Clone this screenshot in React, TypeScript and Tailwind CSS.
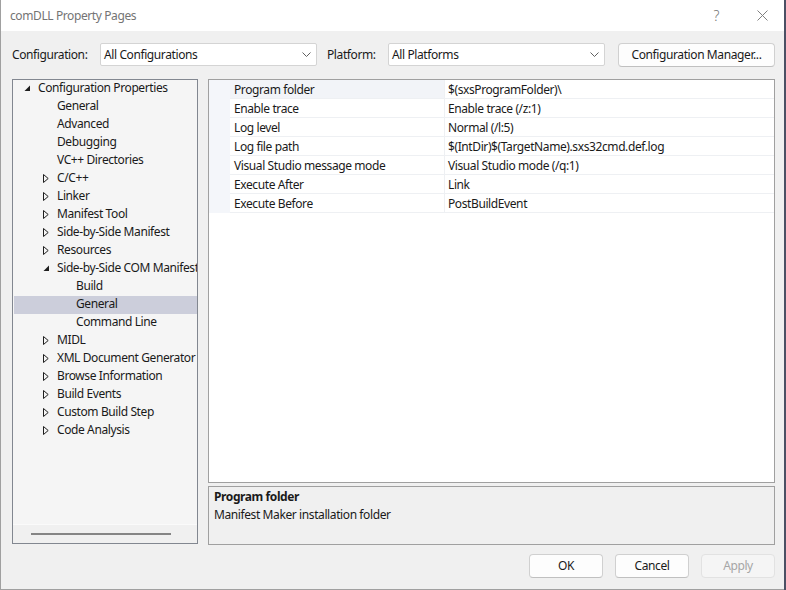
import React from "react";

type Node = {
	label: string;
	level: 0 | 1 | 2;
	state: "open" | "closed" | "leaf";
	selected?: boolean;
};

const tree: Node[] = [
	{ label: "Configuration Properties", level: 0, state: "open" },
	{ label: "General", level: 1, state: "leaf" },
	{ label: "Advanced", level: 1, state: "leaf" },
	{ label: "Debugging", level: 1, state: "leaf" },
	{ label: "VC++ Directories", level: 1, state: "leaf" },
	{ label: "C/C++", level: 1, state: "closed" },
	{ label: "Linker", level: 1, state: "closed" },
	{ label: "Manifest Tool", level: 1, state: "closed" },
	{ label: "Side-by-Side Manifest", level: 1, state: "closed" },
	{ label: "Resources", level: 1, state: "closed" },
	{ label: "Side-by-Side COM Manifest", level: 1, state: "open" },
	{ label: "Build", level: 2, state: "leaf" },
	{ label: "General", level: 2, state: "leaf", selected: true },
	{ label: "Command Line", level: 2, state: "leaf" },
	{ label: "MIDL", level: 1, state: "closed" },
	{ label: "XML Document Generator", level: 1, state: "closed" },
	{ label: "Browse Information", level: 1, state: "closed" },
	{ label: "Build Events", level: 1, state: "closed" },
	{ label: "Custom Build Step", level: 1, state: "closed" },
	{ label: "Code Analysis", level: 1, state: "closed" },
];

const props = [
	["Program folder", "$(sxsProgramFolder)\\"],
	["Enable trace", "Enable trace (/z:1)"],
	["Log level", "Normal (/l:5)"],
	["Log file path", "$(IntDir)$(TargetName).sxs32cmd.def.log"],
	["Visual Studio message mode", "Visual Studio mode (/q:1)"],
	["Execute After", "Link"],
	["Execute Before", "PostBuildEvent"],
];

const indent = {
	0: "pl-[10px]",
	1: "pl-[29px]",
	2: "pl-[48px]",
};

function Collapsed() {
	return (
		<svg width="6" height="9" viewBox="0 0 6 9">
			<path d="M0.5 0.5 L5.2 4.5 L0.5 8.5 Z" fill="none" stroke="#1e1e1e" strokeWidth="1" />
		</svg>
	);
}

function Expanded() {
	return (
		<svg width="7" height="7" viewBox="0 0 7 7">
			<path d="M6 0.5 L6 6 L0.5 6 Z" fill="#1e1e1e" />
		</svg>
	);
}

function Chevron() {
	return (
		<svg width="9" height="6" viewBox="0 0 9 6">
			<path d="M0.5 0.5 L4.5 4.5 L8.5 0.5" fill="none" stroke="#606060" strokeWidth="1" />
		</svg>
	);
}

function Combo({ value }: { value: string }) {
	return (
		<div className="w-[217px] h-[23px] bg-white border border-[#d4d4d4] rounded-[2px] flex items-center pl-[3px] pr-[5px]">
			<span className="flex-1">{value}</span>
			<Chevron />
		</div>
	);
}

export default function App() {
	return (
		<div className="flex w-[786px] h-[590px] bg-[#4b5064] text-[12px] tracking-[-0.4px] text-[#1a1a1a] font-['Noto_Sans',sans-serif]">
			<div className="w-[784px] h-[590px] flex flex-col bg-[#f0f0f0] border-l border-b border-[#a0a0a0]">
				{/* title bar */}
				<div className="h-[31px] bg-white flex items-center pl-[9px] pr-[16px] text-[#747474]">
					<span className="flex-1">comDLL Property Pages</span>
					<span className="text-[14px] font-light mr-[38px]">?</span>
					<svg width="11" height="11" viewBox="0 0 11 11">
						<path d="M0.5 0.5 L10.5 10.5 M10.5 0.5 L0.5 10.5" stroke="#808080" strokeWidth="1" />
					</svg>
				</div>

				<div className="flex-1 flex flex-col pl-[11px] pr-[9px] pt-[11px]">
					{/* configuration row */}
					<div className="h-[25px] flex items-center">
						<span className="w-[88px]">Configuration:</span>
						<Combo value="All Configurations" />
						<span className="ml-[10px] w-[61px]">Platform:</span>
						<Combo value="All Platforms" />
						<button className="ml-auto w-[157px] h-[24px] bg-[#fdfdfd] border border-[#d0d0d0] border-b-[#c0c0c0] rounded-[4px]">
							Configuration Manager...
						</button>
					</div>

					<div className="mt-[12px] h-[466px] flex gap-[10px]">
						{/* tree */}
						<div className="w-[186px] h-[465px] border border-[#828790] bg-[#f5f5f5] flex flex-col">
							<div className="flex-1 overflow-hidden">
								{tree.map((n, i) => (
									<div
										key={i}
										className={`h-[18px] ml-px pb-[2px] flex items-center whitespace-nowrap overflow-hidden ${indent[n.level]} ${n.selected ? "bg-[#cccedb]" : ""}`}
									>
										<span className="w-[14px] shrink-0 flex items-center">
											{n.state === "open" && <Expanded />}
											{n.state === "closed" && <Collapsed />}
										</span>
										<span className="shrink-0">{n.label}</span>
									</div>
								))}
							</div>
							<div className="h-[19px] bg-[#f0f0f0] border-t border-[#fafafa] flex items-center pl-[18px]">
								<div className="w-[140px] h-[2px] bg-[#858585]" />
							</div>
						</div>

						{/* property grid + description */}
						<div className="flex-1 flex flex-col gap-[3px]">
							<div className="h-[404px] bg-white border border-[#a0a0a0]">
								{props.map(([name, value], i) => (
									<div key={i} className="h-[19px] flex">
										<div className="w-[21px] bg-[#f4f6fa]" />
										<div
											className={`w-[215px] pl-[4px] pt-[1px] flex items-center border-b border-r border-[#eef0f3] ${i === 0 ? "bg-[#f2f4f8]" : ""}`}
										>
											{name}
										</div>
										<div className="flex-1 pl-[3px] pt-[1px] flex items-center border-b border-[#eef0f3]">
											{value}
										</div>
									</div>
								))}
							</div>
							<div className="h-[59px] bg-[#f0f0f0] border border-[#a0a0a0] pl-[5px] pt-[1px] leading-[18px]">
								<div className="font-bold">Program folder</div>
								<div>Manifest Maker installation folder</div>
							</div>
						</div>
					</div>

					{/* dialog buttons */}
					<div className="mt-[9px] h-[24px] flex justify-end gap-[12px]">
						<button className="w-[74px] h-[24px] bg-[#fdfdfd] border border-[#d0d0d0] border-b-[#c0c0c0] rounded-[4px]">
							OK
						</button>
						<button className="w-[74px] h-[24px] bg-[#fdfdfd] border border-[#d0d0d0] border-b-[#c0c0c0] rounded-[4px]">
							Cancel
						</button>
						<button className="w-[74px] h-[24px] bg-[#f5f5f5] border border-[#e2e2e2] rounded-[4px] text-[#a6a6a6]">
							Apply
						</button>
					</div>
				</div>
			</div>
		</div>
	);
}
